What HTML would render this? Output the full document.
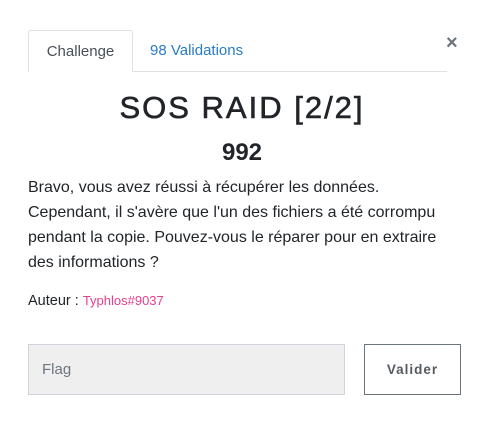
<!DOCTYPE html>
<html><head><meta charset="utf-8"><style>
body{margin:0;width:484px;height:439px;background:#fff;font-family:"Liberation Sans",sans-serif;color:#212529;position:relative;overflow:hidden}
.abs{position:absolute;white-space:nowrap}
.tab{left:28px;top:30px;width:103px;height:41px;border:1px solid #dee2e6;border-bottom:none;border-radius:3px 3px 0 0;background:#fff;font-size:15px;color:#495057;line-height:41px;text-align:center}
.line{left:28px;top:71px;width:419px;height:1px;background:#dee2e6}
.p{left:28px;font-size:16px;line-height:25px}
</style></head><body>
<div class="abs line"></div>
<div class="abs tab">Challenge</div>
<div class="abs" style="left:150px;top:30px;line-height:41px;font-size:15px;color:#2a7bc8">98 Validations</div>
<div class="abs" style="left:446px;top:32px;font-size:20px;font-weight:bold;color:#6c757d">×</div>
<div class="abs" style="left:0;width:484px;text-align:center;top:88px;font-size:31px;letter-spacing:2px;line-height:40px;-webkit-text-stroke:0.6px #212529">SOS RAID [2/2]</div>
<div class="abs" style="left:0;width:484px;text-align:center;top:137px;font-size:24px;font-weight:bold;line-height:32px">992</div>
<div class="abs p" style="top:175px">Bravo, vous avez réussi à récupérer les données.<br>Cependant, il s'avère que l'un des fichiers a été corrompu<br>pendant la copie. Pouvez-vous le réparer pour en extraire<br>des informations ?</div>
<div class="abs p" style="top:288px;font-size:14.5px">Auteur : <span style="color:#e83e8c;font-size:13px">Typhlos#9037</span></div>
<div class="abs" style="left:28px;top:344px;width:317px;height:51px;background:#efefef;border:1px solid #ced4da;box-sizing:border-box;padding-left:13px;line-height:49px;font-size:15px;color:#6c757d">Flag</div>
<div class="abs" style="left:364px;top:344px;width:97px;height:51px;border:1px solid #6c757d;box-sizing:border-box;text-align:center;line-height:49px;font-size:13.5px;font-weight:bold;letter-spacing:1px;color:#555b61">Valider</div>
</body></html>
